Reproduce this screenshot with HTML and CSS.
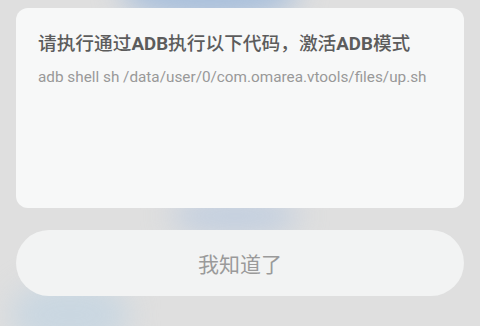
FILE: index.html
```html
<!DOCTYPE html>
<html lang="zh">
<head>
<meta charset="utf-8">
<link rel="stylesheet" href="styles.css">
</head>
<body>
<div class="backdrop">
  <div class="blob blob-top"></div>
  <div class="blob blob-mid"></div>
  <div class="blob blob-bl"></div>
</div>
<main class="sheet">
  <section class="card">
    <h1 class="title">请执行通过<b>ADB</b>执行以下代码，激活<b>ADB</b>模式</h1>
    <p class="cmd">adb shell sh /data/user/0/com.omarea.vtools/files/up.sh</p>
  </section>
  <button class="ok">我知道了</button>
</main>
</body>
</html>
```
FILE: styles.css
```css
html, body {
  margin: 0;
  padding: 0;
}
body {
  width: 480px;
  height: 326px;
  overflow: hidden;
  background: #dfdfdf;
  font-family: Roboto, "Noto Sans CJK SC", sans-serif;
  position: relative;
}
.backdrop {
  position: absolute;
  inset: 0;
  overflow: hidden;
}
.blob {
  position: absolute;
  border-radius: 50%;
  filter: blur(14px);
}
.blob-top {
  left: 120px;
  top: -40px;
  width: 180px;
  height: 60px;
  background: #a9c0dc;
}
.blob-mid {
  left: 170px;
  top: 196px;
  width: 130px;
  height: 40px;
  background: #c3cfdf;
}
.blob-bl {
  left: 10px;
  top: 280px;
  width: 120px;
  height: 70px;
  background: #cad7e1;
}
.sheet {
  position: relative;
  display: flex;
  flex-direction: column;
  gap: 22px;
  padding: 8px 16px 0;
}
.card {
  height: 200px;
  box-sizing: border-box;
  background: #f7f8f8;
  border-radius: 12px;
  padding: 23px 22px 0;
}
.title {
  margin: 0;
  font-size: 18.7px;
  line-height: 26px;
  font-weight: 500;
  color: #5c5c5c;
}
.title b {
  font-weight: 700;
}
.cmd {
  margin: 10px 0 0;
  font-size: 15.3px;
  line-height: 20px;
  color: #999999;
}
.ok {
  height: 66px;
  border: none;
  border-radius: 33px;
  background: #f2f3f3;
  font-family: "Noto Sans CJK SC", sans-serif;
  font-size: 21px;
  color: #9a9a9a;
  padding: 0;
}
```
